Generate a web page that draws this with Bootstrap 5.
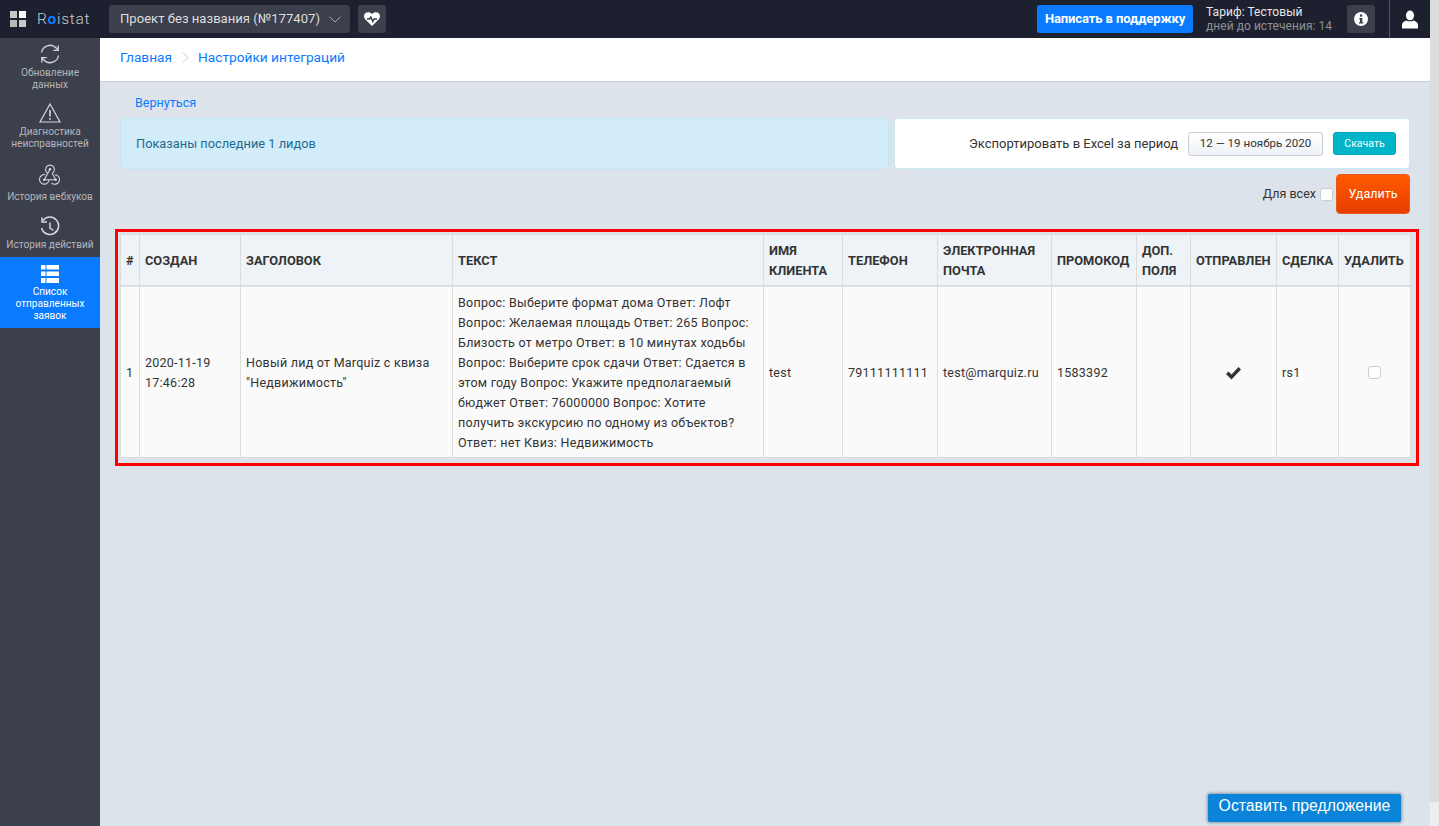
<!DOCTYPE html>
<html lang="ru"><head><meta charset="utf-8"><title>Roistat</title>
<link href="https://cdn.jsdelivr.net/npm/bootstrap@5.3.0/dist/css/bootstrap.min.css" rel="stylesheet">
<style>
html,body{height:100%;overflow:hidden}
body{font-family:"Roboto","Liberation Sans",sans-serif;font-size:13px;color:#333;background:#dde3ea;letter-spacing:0}
a{text-decoration:none;color:#0a7bff}
.pagecol{width:1430px;flex:none}
.sbar{width:9px;flex:none;height:826px}
.sbar-top{height:802px;background:#dcdcdc}
.sbar-bot{height:24px;background:#eeeeee}
.topbar{height:38px;background:#1d202e;color:#e6e6e6}
.brand-squares{display:grid;grid-template-columns:7px 7px;gap:2px;width:16px;margin-left:10px;flex:none}
.brand-squares i{display:block;width:7px;height:7px;background:#c8c8c8}
.brand-squares i:nth-child(2){background:#fff}
.brand-squares i:nth-child(3){background:#b8b8b8}
.brand-name{margin-left:11px;width:72px;flex:none;font-size:15.5px;letter-spacing:.7px;color:#c9cbd1;font-weight:300;line-height:20px}
.brand-name b{color:#0a7bff;font-weight:700}
.tbtn{height:28px;background:#3c3f4c;border-radius:3px;color:#dedede;flex:none}
.proj{width:241px;font-size:13.100px;padding:0 9px 0 11px;white-space:nowrap}
.sq{width:28px}
.sup{height:28px;width:156px;background:#0a7bff;border-radius:3px;color:#fff;font-weight:700;font-size:13px;border:0;padding:0;letter-spacing:-.1px}
.sup:hover{background:#0a7bff;color:#fff}
.tariff{margin-left:13px;width:141px;line-height:14px;font-size:12px;letter-spacing:.05px}
.tariff span{display:block;color:#8f9096}
.usr{width:41px;height:38px;border-left:1px solid #55575f;margin-left:14px;padding-right:1px}
.wrap{height:788px}
.side{width:100px;background:#3c3f4c;color:#b5b6bb;flex:none;font-size:10.1px;line-height:12px;text-align:center}
.sitem{display:block}
.sitem svg{display:block;margin:0 auto}
.s1{height:60px;padding-top:6px}.s2{height:61px;padding-top:5px}.s3{height:50px;padding-top:5px}.s4{height:48px;padding-top:7px}
.s1 svg{margin-bottom:3px}.s2 svg{margin-bottom:3px}.s3 svg{margin-bottom:6px}.s4 svg{margin-bottom:1px}
.sact{height:71px;background:#0a7bff;color:#fff;padding-top:8px}
.sact svg{margin-bottom:3px}
.mainpane{width:1330px;flex:none;min-width:0}
.crumbs{height:44px;background:#fff;border-bottom:1px solid #ccd0d4;padding:0 0 5px 20px;font-size:13.700px}
.crumbs svg{margin:0 9.500px}
.back{padding:12px 0 0 35px;height:36px;line-height:17px;font-size:12.6px}
.tophead{padding:0 20px 0 20px;gap:5px;height:51px}
.leads{width:769px;background:#d2ecf9;border:1px solid #c3e6f3;border-radius:4px;color:#1e6a8e;padding:1px 0 0 15px;font-size:12.8px}
.export{width:516px;background:#fff;border:1px solid #c8e8f2;border-radius:4px;padding-right:13px;font-size:13px;color:#333}
.daterange{height:24px;width:135px;border:1px solid #c5ccd3;border-radius:3px;background:linear-gradient(#fff,#eef2f6);font-size:11.6px;color:#333;margin:0 10px;padding:0}
.dl{height:23px;width:63px;padding:0;background:#00b5c8;border:1px solid #00a6b8;border-radius:3px;color:#fff;font-size:10.5px}
.delrow{padding:5px 20px 0 0;height:45px;font-size:12.5px}
.delrow .form-check-input{width:13px;height:13px;margin:0 3px 0 4px;border-color:#ccc}
.delbtn{width:74px;height:40px;padding:0;border:1px solid #e85a1c;border-radius:4px;background:linear-gradient(#ff5a00,#e83e00);color:#fff;font-size:12.5px}
.redbox{margin:15px 0 0 15px;width:1304px;height:237px;border:3px solid #f00;padding:2px 5px 0 2px}
table.leadt{table-layout:fixed;width:1290px;margin:0;border-collapse:collapse;line-height:20px;color:#333}
.leadt th,.leadt td{border:1px solid #dcdcdc;padding:6px 5px 4px;vertical-align:middle;box-shadow:none}
.leadt thead th{background:#eef3f8;height:51px;font-weight:700;text-transform:uppercase;border-bottom:2px solid #d9dde1;color:#333;font-size:12.8px;line-height:20px}
.leadt tbody td{background:#fafafa;height:171px;font-size:12.5px;letter-spacing:.25px;padding:5px 5px 3px}
.leadt .form-check-input{width:13px;height:13px;display:block;margin:0 auto;border-color:#ccc}
.offer{position:absolute;left:1208px;top:794px;width:193px;height:28px;background:#0a84d8;color:#fff;font:15.8px/24px "Liberation Sans",sans-serif;text-align:center;border-radius:2px;box-shadow:0 0 3px 1px rgba(70,90,110,.55)}
</style></head>
<body class="d-flex">
<div class="pagecol">
<header class="topbar d-flex align-items-center">
  <div class="brand-squares"><i></i><i></i><i></i><i></i></div>
  <div class="brand-name">R<b>o</b>istat</div>
  <div class="tbtn proj d-flex align-items-center justify-content-between">Проект без названия (№177407)
    <svg width="12" height="7" viewBox="0 0 12 7" fill="none" stroke="#a9abb2"><path d="M.5.8 6 6l5.500-5.200"/></svg></div>
  <div class="tbtn sq d-flex align-items-center justify-content-center ms-2">
    <svg width="16" height="14" viewBox="0 0 16 14"><path fill="#fff" d="M8 14 1.200 7.300C-.7 5.300-.2 2 1.800.8 3.800-.4 6.300.1 8 2c1.700-1.900 4.200-2.400 6.200-1.200 2 1.200 2.500 4.500.6 6.500z"/><path fill="none" stroke="#3c3f4c" stroke-width="1.500" d="M3 7h2.500L6.800 5l2 4.500L10 7h3"/></svg></div>
  <div class="ms-auto d-flex align-items-center">
    <button class="btn sup">Написать в поддержку</button>
    <div class="tariff">Тариф: Тестовый<span>дней до истечения: 14</span></div>
    <div class="tbtn sq d-flex align-items-center justify-content-center">
      <svg width="14" height="14" viewBox="0 0 14 14"><circle cx="7" cy="7" r="7" fill="#fff"/><rect x="6" y="2.500" width="2.200" height="2.200" fill="#3c3f4c"/><path fill="#3c3f4c" d="M5.300 6h3v4.200h1v1.300H5v-1.300h1V7.300h-.7z"/></svg></div>
    <div class="usr d-flex align-items-center justify-content-center">
      <svg width="16" height="19" viewBox="0 0 17 19"><ellipse cx="8.500" cy="5.200" rx="4.300" ry="5.200" fill="#fff"/><path fill="#fff" d="M0 19v-4c0-2.500 3-4 5-4.500 1.500 1.300 5.500 1.300 7 0 2 .5 5 2 5 4.500v4z"/></svg></div>
  </div>
</header>
<div class="wrap d-flex">
  <nav class="side">
    <a class="sitem s1" style="color:inherit" href="#"><svg width="20" height="20" viewBox="0 0 20 20" fill="none" stroke="#d8d8dc" stroke-width="1.300"><path d="M1.500 8.500A8.600 8.600 0 0 1 16 3.800l2 2.200M18.500 11.500A8.600 8.600 0 0 1 4 16.200L2 14"/><path d="M18.200 1.500V6.300h-4.800M1.800 18.500V13.700h4.800"/></svg>Обновление<br>данных</a>
    <a class="sitem s2" style="color:inherit" href="#"><svg width="22" height="20" viewBox="0 0 22 20" fill="none" stroke="#d8d8dc" stroke-width="1.200"><path d="M11 1 21 19H1z"/><path stroke-width="1.600" d="M11 7v6.500M11 15v1.800"/></svg>Диагностика<br>неисправностей</a>
    <a class="sitem s3" style="color:inherit" href="#"><svg width="24" height="21" viewBox="0 0 24 22" fill="none" stroke="#d8d8dc" stroke-width="1.100"><path d="M9.800 9.800A4.600 4.600 0 1 1 14.200 9.800"/><path d="M7 11.200A5 5 0 1 0 11 16.500"/><path d="M17 11.200A5 5 0 1 1 13.500 19.800"/><path d="M12 5.500 6 16.500H18L14.200 9.800"/><circle cx="12" cy="5.500" r="1.300" fill="#d8d8dc" stroke="none"/><circle cx="6" cy="16.500" r="1.300" fill="#d8d8dc" stroke="none"/><circle cx="18" cy="16.500" r="1.300" fill="#d8d8dc" stroke="none"/></svg>История вебхуков</a>
    <a class="sitem s4" style="color:inherit" href="#"><svg width="20" height="22" viewBox="0 0 20 22" fill="none" stroke="#d8d8dc" stroke-width="1.500"><path d="M3 4.500A8.700 8.700 0 1 1 1.500 12"/><path d="M2 1.500V6h5M10 6.500V12l3.500 2.500"/></svg>История действий</a>
    <a class="sitem sact" style="color:#fff" href="#"><svg width="18" height="18" viewBox="0 0 18 18" fill="#fff"><path d="M0 0h4.500v4.500H0zM5.500 0H18v4.500H5.500zM0 6.500h4.500V11H0zM5.500 6.500H18V11H5.500zM0 13h4.500v5H0zM5.500 13H18v5H5.500z"/></svg>Список<br>отправленных<br>заявок</a>
  </nav>
  <main class="mainpane">
    <div class="crumbs d-flex align-items-center"><a href="#">Главная</a><svg width="7" height="11" viewBox="0 0 7 11" fill="none" stroke="#c4c8cc"><path d="m1 .7 5 4.800-5 4.800"/></svg><a href="#">Настройки интеграций</a></div>
    <div class="back"><a href="#">Вернуться</a></div>
    <div class="tophead d-flex">
      <div class="leads d-flex align-items-center">Показаны последние 1 лидов</div>
      <div class="export d-flex align-items-center justify-content-end">Экспортировать в Excel за период
        <button class="btn daterange">12 — 19 ноябрь 2020</button><button class="btn dl">Скачать</button></div>
    </div>
    <div class="delrow d-flex justify-content-end align-items-center">Для всех<input class="form-check-input" type="checkbox" aria-label="Для всех"><button class="btn delbtn">Удалить</button></div>
    <div class="redbox">
      <table class="table leadt">
        <colgroup><col style="width:19px"><col style="width:101px"><col style="width:212px"><col style="width:311px"><col style="width:79px"><col style="width:95px"><col style="width:114px"><col style="width:85px"><col style="width:54px"><col style="width:86px"><col style="width:62px"><col style="width:72px"></colgroup>
        <thead><tr><th>#</th><th>Создан</th><th>Заголовок</th><th>Текст</th><th>Имя клиента</th><th>Телефон</th><th>Электронная почта</th><th>Промокод</th><th>Доп. поля</th><th>Отправлен</th><th>Сделка</th><th>Удалить</th></tr></thead>
        <tbody><tr><td>1</td><td>2020-11-19 17:46:28</td><td>Новый лид от Marquiz с квиза "Недвижимость"</td>
        <td>Вопрос: Выберите формат дома Ответ: Лофт Вопрос: Желаемая площадь Ответ: 265 Вопрос: Близость от метро Ответ: в 10 минутах ходьбы Вопрос: Выберите срок сдачи Ответ: Сдается в этом году Вопрос: Укажите предполагаемый бюджет Ответ: 76000000 Вопрос: Хотите получить экскурсию по одному из объектов? Ответ: нет Квиз: Недвижимость</td>
        <td>test</td><td>79111111111</td><td>test@marquiz.ru</td><td>1583392</td><td></td>
        <td class="text-center"><svg width="15" height="13" viewBox="0 0 15 13"><path fill="#333" d="M0 7l2.500-2.500L5.500 7.500 12.500 0 15 2.500 5.500 12.500z"/></svg></td>
        <td>rs1</td><td><input class="form-check-input" type="checkbox" aria-label="Удалить"></td></tr></tbody>
      </table>
    </div>
  </main>
</div>
</div>
<div class="sbar"><div class="sbar-top"></div><div class="sbar-bot"></div></div>
<a class="offer" href="#">Оставить предложение</a>
</body></html>
